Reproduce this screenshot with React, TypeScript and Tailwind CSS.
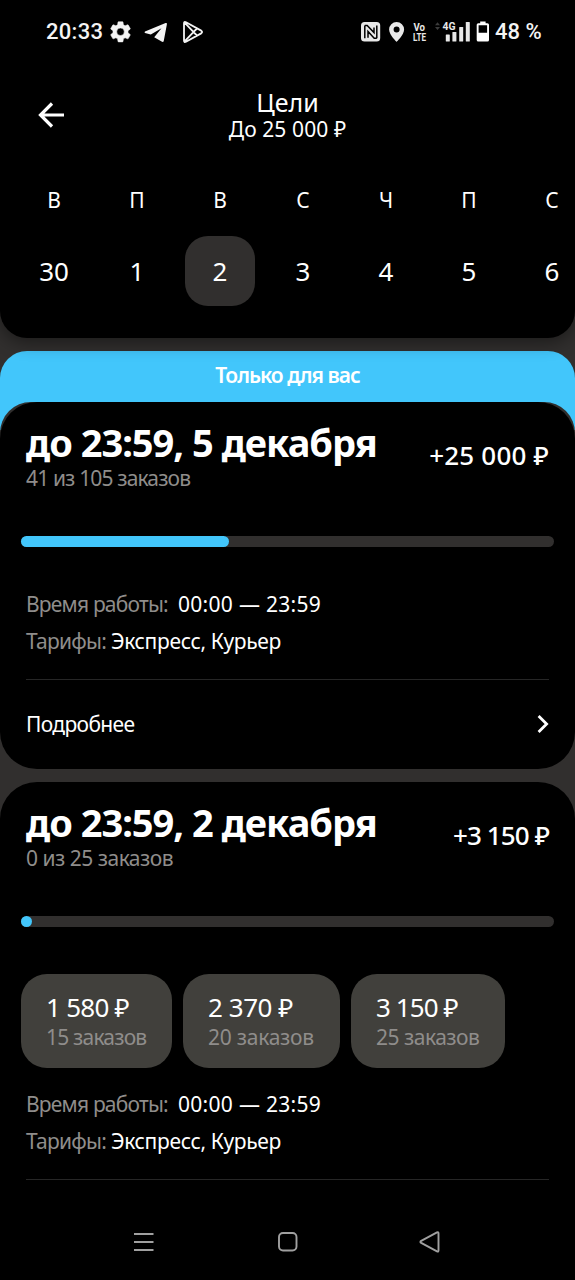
import React from "react";

const DAYS = [
  { letter: "В", date: "30" },
  { letter: "П", date: "1" },
  { letter: "В", date: "2", active: true },
  { letter: "С", date: "3" },
  { letter: "Ч", date: "4" },
  { letter: "П", date: "5" },
  { letter: "С", date: "6" },
];

function StatusBar() {
  return (
    <div className="flex h-[64px] items-center pl-[46px] font-[Roboto,sans-serif] text-[22px] font-medium text-[#f4f4f4]">
      <span className="w-[64px] leading-[26px] tracking-[0.3px]">20:33</span>
      <svg width="96" height="26" viewBox="110 19 96 26" fill="none">
        <g transform="translate(107.9 19.2) scale(1.05)">
          <path
            fill="#f4f4f4"
            stroke="#f4f4f4"
            strokeWidth="0.5"
            d="M19.14 12.94c.04-.3.06-.61.06-.94 0-.32-.02-.64-.07-.94l2.03-1.58c.18-.14.23-.41.12-.61l-1.92-3.32c-.12-.22-.37-.29-.59-.22l-2.39.96c-.5-.38-1.03-.7-1.62-.94L14.4 2.81c-.04-.24-.24-.41-.48-.41h-3.84c-.24 0-.43.17-.47.41L9.25 5.35c-.59.24-1.13.57-1.62.94L5.24 5.33c-.22-.08-.47 0-.59.22L2.74 8.87c-.12.21-.08.47.12.61l2.03 1.58c-.05.3-.09.63-.09.94s.02.64.07.94l-2.03 1.58c-.18.14-.23.41-.12.61l1.92 3.32c.12.22.37.29.59.22l2.39-.96c.5.38 1.03.7 1.62.94l.36 2.54c.05.24.24.41.48.41h3.84c.24 0 .44-.17.47-.41l.36-2.54c.59-.24 1.13-.56 1.62-.94l2.39.96c.22.08.47 0 .59-.22l1.92-3.32c.12-.22.07-.47-.12-.61l-2.01-1.58zM12 15.6A3.6 3.6 0 1 1 12 8.4a3.6 3.6 0 0 1 0 7.2z"
          />
        </g>
        <path
          fill="#f4f4f4"
          d="M145 31.6 165.6 23.1Q167.2 22.6 166.9 24.2L163.8 40.7Q163.4 42.6 161.6 41.5L154.2 37.2 161.5 28.2 150.8 34.6 145 33Q144 32.3 145 31.6Z"
        />
        <path
          stroke="#f4f4f4"
          strokeWidth="1.8"
          strokeLinejoin="round"
          d="M184 23.4Q184 21.2 186 22.2L201.2 30.6Q203 32 201.2 33.4L186 41.8Q184 42.8 184 40.6ZM184.6 22.6 197 35.7M184.6 41.4 197 28.3M193.3 32 197.3 28.3M193.3 32 197.3 35.7"
        />
      </svg>
      <svg className="ml-auto" width="132" height="26" viewBox="359 19 132 26" fill="#e8e8e8">
        <rect x="361" y="22" width="19.2" height="19.6" rx="3.5" />
        <path
          d="M364.8 25.4V38.2M364.8 25.4H367.2L374 32.6V27.5M376.8 38.2V25.4M376.8 38.2H374.2L368 31.4V37.8"
          stroke="#000"
          strokeWidth="1.5"
          fill="none"
        />
        <path
          fillRule="evenodd"
          d="M396.6 22a7.5 7.5 0 0 0-7.5 7.5c0 5.2 7.5 12.4 7.5 12.4s7.5-7.2 7.5-12.4a7.5 7.5 0 0 0-7.5-7.5zm0 4.6a3 3 0 1 1 0 6 3 3 0 0 1 0-6z"
        />
        <text x="413.5" y="31" fontSize="10.5" fontWeight="700" textLength="11.5" lengthAdjust="spacingAndGlyphs" fontFamily="Roboto">
          Vo
        </text>
        <text x="413" y="41" fontSize="11.5" fontWeight="700" textLength="13" lengthAdjust="spacingAndGlyphs" fontFamily="Roboto">
          LTE
        </text>
        <path fill="#3c3c3c" d="M435 25.3 437.5 22.3 440 25.3ZM435 27 437.5 30 440 27Z" />
        <text x="442.5" y="30" fontSize="11" fontWeight="700" textLength="13" lengthAdjust="spacingAndGlyphs" fontFamily="Roboto">
          4G
        </text>
        <rect x="445.8" y="34.5" width="4" height="7" rx="0.6" />
        <rect x="452.4" y="32" width="4" height="9.5" rx="0.6" />
        <rect x="459.2" y="27" width="4" height="14.5" rx="0.6" />
        <rect x="465.8" y="22" width="4" height="19.5" rx="0.6" />
        <path
          fill="#fff"
          fillRule="evenodd"
          d="M480.2 21.5H485.6V23.2H487.4Q489 23.2 489 24.8V40Q489 41.6 487.4 41.6H478.3Q476.7 41.6 476.7 40V24.8Q476.7 23.2 478.3 23.2H480.2ZM478.6 25.2V32.8H487.1V25.2Z"
        />
      </svg>
      <span className="w-[84px] pl-[4px] leading-[26px]">48 %</span>
    </div>
  );
}

function Header() {
  return (
    <header className="relative z-10 h-[338px] w-full overflow-hidden rounded-b-[27px] bg-black shadow-[0_4px_18px_rgba(0,0,0,0.45)]">
      <StatusBar />
      <div className="grid h-[101px] grid-cols-[100px_1fr_100px] pt-[24px] text-white">
        <svg className="mt-[13px] ml-[38px]" width="28" height="28" viewBox="0 0 28 28" fill="none" stroke="#fff" strokeWidth="3.2">
          <path d="M26 14H2.5M14 2.5 2.5 14 14 25.5" />
        </svg>
        <div className="flex flex-col items-center">
          <h1 className="text-[25px] leading-[28px]">Цели</h1>
          <p className="text-[21px] leading-[27px] tracking-[0.1px]">До 25 000 ₽</p>
        </div>
      </div>
      <div className="flex pl-[12.5px] text-white">
        {DAYS.map((d, i) => (
          <div key={i} className="flex w-[83px] shrink-0 flex-col items-center">
            <span className="mt-[20px] text-[21px] leading-[30px]">{d.letter}</span>
            <span
              className={
                "mt-[21px] flex h-[70px] w-[70px] items-center justify-center rounded-[23px] text-[26px] " +
                (d.active ? "bg-[#312f2e]" : "")
              }
            >
              {d.date}
            </span>
          </div>
        ))}
      </div>
    </header>
  );
}

type CardTopProps = {
  title: string;
  sub: string;
  amount: string;
  fill: string;
  subTracking: string;
  amountTracking: string;
};

function CardTop({ title, sub, amount, fill, subTracking, amountTracking }: CardTopProps) {
  return (
    <>
      <div className="flex justify-between px-[26px] pt-[17px]">
        <div>
          <h2 className="text-[38px] leading-[46px] font-bold tracking-[-1px] whitespace-nowrap">{title}</h2>
          <p className={"text-[21px] leading-[26px] text-[#8f8d8b] " + subTracking}>{sub}</p>
        </div>
        <div className={"mt-[18px] text-[26px] leading-[36px] font-medium whitespace-nowrap " + amountTracking}>{amount}</div>
      </div>
      <div className="mx-[21px] mt-[45px] h-[11px] rounded-full bg-[#312f2e]">
        <div className={"h-full rounded-full bg-[#42c6fb] " + fill} />
      </div>
    </>
  );
}

function Info() {
  return (
    <div className="mx-[26px] h-[94px] border-b border-[#262626] text-[21px] leading-[37px] whitespace-nowrap text-white">
      <div className="flex">
        <span className="w-[152px] tracking-[-0.8px] text-[#8f8d8b]">Время работы:</span>
        <span className="tracking-[0.3px]">00:00 — 23:59</span>
      </div>
      <div className="flex">
        <span className="w-[85px] tracking-[-0.75px] text-[#8f8d8b]">Тарифы:</span>
        <span className="tracking-[-0.35px]">Экспресс, Курьер</span>
      </div>
    </div>
  );
}

type ChipProps = {
  amount: string;
  count: string;
  width: string;
  amountTracking: string;
  countTracking: string;
};

function Chip({ amount, count, width, amountTracking, countTracking }: ChipProps) {
  return (
    <div className={"h-[94px] rounded-[26px] bg-[#41403c] pt-[16px] pl-[25px] whitespace-nowrap " + width}>
      <div className={"text-[26px] leading-[35px] text-white " + amountTracking}>{amount}</div>
      <div className={"text-[21px] leading-[24px] text-[#8f8d8b] " + countTracking}>{count}</div>
    </div>
  );
}

function NavBar() {
  return (
    <nav className="flex h-[76px] items-center justify-between px-[132px]">
      <svg width="24" height="24" viewBox="0 0 24 24" stroke="#a0a0a0" strokeWidth="1.9">
        <path d="M2 4H21.5M2 12H21.5M2 20H21.5" />
      </svg>
      <svg width="24" height="24" viewBox="0 0 24 24" fill="none" stroke="#a0a0a0" strokeWidth="1.9">
        <rect x="3" y="3" width="17.5" height="17.5" rx="4" />
      </svg>
      <svg width="24" height="24" viewBox="0 0 24 24" fill="none" stroke="#a0a0a0" strokeWidth="1.9" strokeLinejoin="round">
        <path d="M2.2 10.9 18 2.4Q19.5 1.9 19.5 3.4V20.6Q19.5 22.1 18 21.4L2.2 12.9Q.6 11.9 2.2 10.9Z" />
      </svg>
    </nav>
  );
}

export default function App() {
  return (
    <div className="flex h-[1280px] w-[575px] flex-col overflow-hidden bg-[#312f2e] font-['Noto_Sans',sans-serif] text-white">
      <Header />
      <main className="flex flex-col pt-[13px]">
        <div className="flex h-[51px] justify-center rounded-t-[27px] bg-[#42c6fb] text-[21px] leading-[49px] font-semibold tracking-[-1px]">
          Только для вас
        </div>
        <div className="bg-[linear-gradient(#42c6fb_28px,#312f2e_28px)]">
          <div className="rounded-t-[31px] bg-[#312f2e]">
            <section className="h-[367px] rounded-[37px] bg-black">
              <CardTop
                title="до 23:59, 5 декабря"
                sub="41 из 105 заказов"
                amount="+25 000 ₽"
                fill="w-[208px]"
                subTracking="tracking-[-0.85px]"
                amountTracking="tracking-[0.2px]"
              />
              <div className="mt-[39px] pb-px">
                <Info />
              </div>
              <div className="mt-[25px] flex items-center justify-between px-[26px]">
                <span className="text-[21px] leading-[36px] tracking-[-0.65px]">Подробнее</span>
                <svg width="12" height="20" viewBox="0 0 12 20" fill="none" stroke="#fff" strokeWidth="2.8">
                  <path d="M1.6 2 9.6 10 1.6 18" />
                </svg>
              </div>
            </section>
          </div>
        </div>
        <section className="mt-[13px] h-[422px] rounded-t-[37px] bg-black">
          <CardTop
            title="до 23:59, 2 декабря"
            sub="0 из 25 заказов"
            amount="+3 150 ₽"
            fill="w-[11px]"
            subTracking="tracking-[-0.5px]"
            amountTracking="tracking-[-0.9px]"
          />
          <div className="mt-[47px] ml-[21px] flex gap-[11px]">
            <Chip
              amount="1 580 ₽"
              count="15 заказов"
              width="w-[151px]"
              amountTracking="tracking-[-0.75px]"
              countTracking="tracking-[-0.8px]"
            />
            <Chip
              amount="2 370 ₽"
              count="20 заказов"
              width="w-[157px]"
              amountTracking="tracking-[-0.45px]"
              countTracking="tracking-[-0.25px]"
            />
            <Chip
              amount="3 150 ₽"
              count="25 заказов"
              width="w-[154px]"
              amountTracking="tracking-[-0.9px]"
              countTracking="tracking-[-0.5px]"
            />
          </div>
          <div className="mt-[18px]">
            <Info />
          </div>
        </section>
      </main>
      <div className="bg-black">
        <NavBar />
      </div>
    </div>
  );
}
